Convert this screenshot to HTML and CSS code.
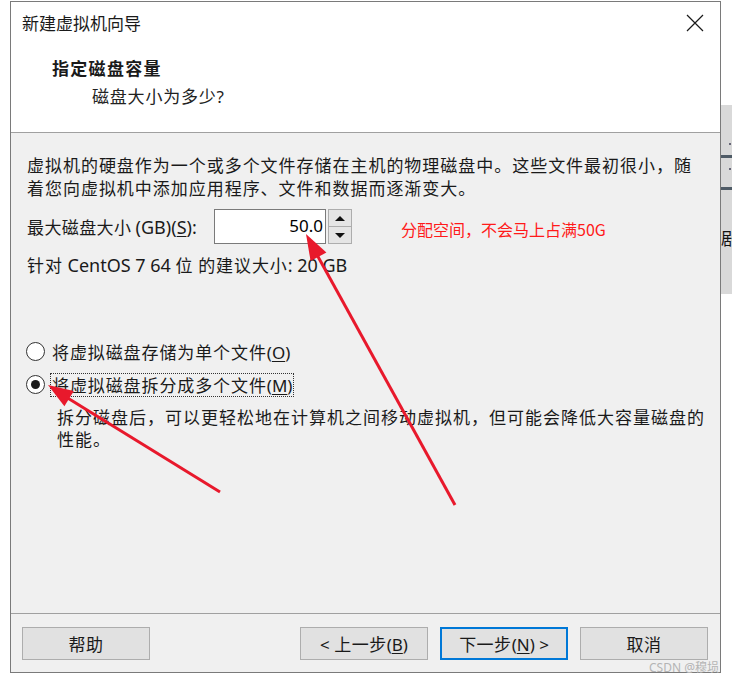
FILE: index.html
```html
<!DOCTYPE html>
<html lang="zh-CN">
<head>
<meta charset="utf-8">
<title>新建虚拟机向导</title>
<link rel="stylesheet" href="styles.css">
</head>
<body>
<div class="page">
  <div class="window">
    <div class="top">
      <div class="titlebar">
        <span class="title">新建虚拟机向导</span>
        <svg class="close" width="18" height="18" viewBox="0 0 18 18"><path d="M1 1 L17 17 M17 1 L1 17" stroke="#1a1a1a" stroke-width="1.2" fill="none"/></svg>
      </div>
      <div class="header">
        <div class="h-title">指定磁盘容量</div>
        <div class="h-sub">磁盘大小为多少<span class="lat">?</span></div>
      </div>
    </div>
    <div class="content">
      <p class="para">虚拟机的硬盘作为一个或多个文件存储在主机的物理磁盘中。这些文件最初很小，随<br>着您向虚拟机中添加应用程序、文件和数据而逐渐变大。</p>
      <div class="size-row">
        <label class="size-label">最大磁盘大小 <span class="lat big">(GB)(<u>S</u>):</span></label>
        <div class="input">50.0</div>
        <div class="spin">
          <div class="spin-btn"><span class="tri-up"></span></div>
          <div class="spin-btn"><span class="tri-down"></span></div>
        </div>
        <span class="note">分配空间，不会马上占满50G</span>
      </div>
      <div class="recommend">针对 <span class="lat big">CentOS 7 64</span> 位 的建议大小<span class="lat big">: 20 GB</span></div>
      <div class="radios">
        <div class="radio-row">
          <span class="radio"></span>
          <span class="radio-text">将虚拟磁盘存储为单个文件<span class="lat">(<u>O</u>)</span></span>
        </div>
        <div class="radio-row">
          <span class="radio checked"></span>
          <span class="radio-text focus">将虚拟磁盘拆分成多个文件<span class="lat">(<u>M</u>)</span></span>
        </div>
      </div>
      <p class="desc">拆分磁盘后，可以更轻松地在计算机之间移动虚拟机，但可能会降低大容量磁盘的<br>性能。</p>
    </div>
    <div class="footer">
      <button class="btn">帮助</button>
      <div class="spacer"></div>
      <button class="btn"><span class="lat">&lt;</span> 上一步<span class="lat">(<u>B</u>)</span></button>
      <button class="btn primary">下一步<span class="lat">(<u>N</u>) &gt;</span></button>
      <button class="btn">取消</button>
    </div>
  </div>
  <div class="side">
    <div class="side-dot first"></div>
    <div class="side-bar"></div>
    <div class="side-dot"></div>
    <div class="side-bar last"></div>
    <div class="side-char">剧</div>
  </div>
  <div class="watermark">CSDN @穆埙</div>
  <svg class="arrows" width="732" height="683" viewBox="0 0 732 683">
    <line x1="455" y1="505" x2="316" y2="253" stroke="#e8192c" stroke-width="3"/>
    <polygon points="306,234 326.4,252.5 310.6,261.1" fill="#e8192c"/>
    <line x1="220" y1="492" x2="66" y2="397" stroke="#e8192c" stroke-width="3"/>
    <polygon points="48,385 73.8,391.1 64.4,406.3" fill="#e8192c"/>
  </svg>
</div>
</body>
</html>
```

FILE: styles.css
```css
* { box-sizing: border-box; }
html, body { margin: 0; padding: 0; background: #ffffff; }
body {
  font-family: "Noto Sans CJK SC", "Noto Sans", sans-serif;
  color: #1a1a1a;
}
.page {
  position: relative;
  width: 732px;
  height: 683px;
  overflow: hidden;
  display: flex;
  align-items: flex-start;
}
.lat { font-family: "Noto Sans", "Noto Sans CJK SC", sans-serif; letter-spacing: 0; }
.lat.big { font-size: 18px; }
u { text-decoration-thickness: 1px; text-underline-offset: 2px; }

.window {
  margin-left: 10px;
  margin-top: 1px;
  width: 712px;
  height: 672px;
  border: 1px solid #7a7a7a;
  display: flex;
  flex-direction: column;
  background: #f0f0f0;
}
.top {
  height: 131px;
  background: #ffffff;
  border-bottom: 1px solid #a0a0a0;
  flex: 0 0 auto;
}
.titlebar {
  height: 41px;
  display: flex;
  align-items: center;
  justify-content: space-between;
  padding-left: 11px;
  padding-right: 16px;
}
.title { font-size: 17px; letter-spacing: 0; line-height: 24px; }
.close { display: block; margin-top: 1px; }
.header { padding-top: 13px; }
.h-title {
  padding-left: 41px;
  font-size: 17px;
  font-weight: 700;
  line-height: 24px;
  letter-spacing: 1.3px;
}
.h-sub {
  margin-top: 4px;
  padding-left: 81px;
  font-size: 17px;
  line-height: 24px;
  letter-spacing: 0.8px;
  color: #222;
}

.content {
  flex: 1 1 auto;
  padding: 20px 0 0 16px;
  font-size: 17px;
}
.para {
  margin: 0;
  line-height: 23px;
  letter-spacing: 0.97px;
  white-space: nowrap;
}
.size-row {
  margin-top: 10px;
  display: flex;
  align-items: center;
  height: 35px;
}
.size-label {
  flex: 0 0 187px;
  line-height: 23px;
  letter-spacing: 0.4px;
}
.input {
  width: 112px;
  height: 35px;
  border: 1px solid #7a7a7a;
  background: #ffffff;
  font-family: "Noto Sans", sans-serif;
  font-size: 17px;
  line-height: 31px;
  text-align: right;
  padding-right: 2px;
  color: #000;
}
.spin {
  margin-left: 2px;
  width: 24px;
  height: 35px;
  display: flex;
  flex-direction: column;
}
.spin-btn {
  flex: 1 1 0;
  background: #e5e5e5;
  border: 1px solid #adadad;
  display: flex;
  align-items: center;
  justify-content: center;
}
.spin-btn + .spin-btn { border-top: none; }
.tri-up, .tri-down {
  width: 0; height: 0;
  border-left: 5px solid transparent;
  border-right: 5px solid transparent;
}
.tri-up { border-bottom: 5px solid #111; }
.tri-down { border-top: 5px solid #111; }
.note {
  margin-left: 49px;
  margin-top: 5px;
  font-size: 16px;
  line-height: 22px;
  color: #ff1a1a;
}
.recommend {
  margin-top: 9px;
  line-height: 23px;
  letter-spacing: 0.9px;
}
.radios {
  margin-top: 63px;
  display: flex;
  flex-direction: column;
  gap: 10px;
}
.radio-row {
  display: flex;
  align-items: center;
  height: 23px;
}
.radio {
  width: 19px;
  height: 19px;
  margin-left: -1px;
  border: 1px solid #333;
  border-radius: 50%;
  background: #fff;
  display: flex;
  align-items: center;
  justify-content: center;
}
.radio.checked::after {
  content: "";
  width: 9px;
  height: 9px;
  border-radius: 50%;
  background: #1a1a1a;
}
.radio-text {
  margin-left: 5px;
  padding: 0 1px;
  border: 1px dotted transparent;
  line-height: 21px;
  letter-spacing: 0.9px;
}
.radio-text.focus { border-color: #333; }
.desc {
  margin: 10px 0 0 0;
  padding-left: 30px;
  white-space: nowrap;
  line-height: 22px;
  letter-spacing: 1px;
}

.footer {
  flex: 0 0 59px;
  border-top: 1px solid #a0a0a0;
  display: flex;
  align-items: flex-start;
  padding: 13px 12px 0 11px;
  gap: 12px;
}
.spacer { flex: 1 1 auto; }
.btn {
  width: 128px;
  height: 33px;
  background: #e1e1e1;
  border: 1px solid #adadad;
  font-family: "Noto Sans CJK SC", "Noto Sans", sans-serif;
  font-size: 17px;
  color: #1a1a1a;
  letter-spacing: 0.5px;
  padding: 0;
  line-height: 29px;
}
.btn.primary { border: 2px solid #0078d7; }

.side {
  margin-top: 105px;
  width: 11px;
  height: 189px;
  background: #d9d9d9;
  overflow: hidden;
}
.side-dot { width: 2px; height: 2px; margin: 10px 0 0 8px; background: #667; }
.side-dot.first { margin-top: 38px; }
.side-bar { height: 3px; margin-top: 10px; background: #4f5b66; }
.side-bar.last { margin-top: 17px; }
.side-char {
  margin-top: 38px;
  font-size: 17px;
  line-height: 20px;
  color: #111;
  white-space: nowrap;
}
.watermark {
  position: absolute;
  left: 649px;
  top: 660px;
  font-size: 12px;
  line-height: 16px;
  color: #b4b4b4;
  font-family: "Noto Sans", "Noto Sans CJK SC", sans-serif;
}
.arrows {
  position: absolute;
  left: 0;
  top: 0;
  pointer-events: none;
}
```
